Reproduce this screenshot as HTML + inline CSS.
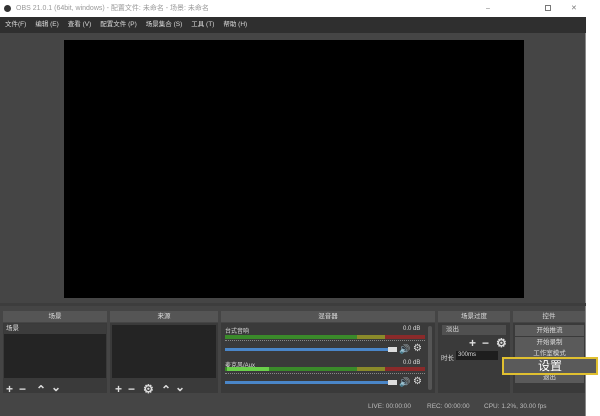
<!DOCTYPE html><html><head><meta charset="utf-8"><style>
*{margin:0;padding:0;box-sizing:border-box}
body{width:600px;height:416px;background:#fff;position:relative;overflow:hidden;font-family:"Liberation Sans","Noto Sans CJK SC",sans-serif;font-size:7px;color:#ddd}
.a{position:absolute}
.win{left:0;top:0;width:586px;height:416px;background:#454545;border-right:1px solid #888}
.title{left:0;top:0;width:586px;height:17px;background:#fff;color:#999;font-size:7px;line-height:17px;padding-left:16px}
.menu{left:0;top:17px;width:586px;height:16px;background:#2f2f2f;line-height:16px;font-size:6.5px;color:#ddd}
.menu span{margin-left:5px;margin-right:4px}
.hdr{top:311px;height:11px;background:#555;color:#ddd;text-align:center;line-height:11px;font-size:6.5px}
.pan{background:#3a3a3a}
.btn{background:#5a5a5a;color:#ddd;text-align:center;font-size:6.5px;line-height:11px;height:11px}
.meter{height:4px;background:linear-gradient(90deg,#3a8a2a 0,#3a8a2a 66%,#8a8a2a 66%,#8a8a2a 80%,#8a2a2a 80%)}
.blue{height:3px;background:#4a86c8}
.st{top:403px;color:#bbb;font-size:6.5px}
.ic{font-size:12px;line-height:12px;color:#ddd;font-weight:bold}
</style></head><body>
<div class="a win"></div>
<div class="a title"><span style="position:absolute;left:4px;top:5px;width:7px;height:7px;border-radius:50%;background:#333"></span>OBS 21.0.1 (64bit, windows) - 配置文件: 未命名 - 场景: 未命名
<span style="position:absolute;left:486px;color:#777">–</span><span style="position:absolute;left:545px;top:5px;width:6px;height:6px;border:1px solid #777"></span><span style="position:absolute;left:571px;color:#777">✕</span></div>
<div class="a menu"><span>文件(F)</span><span>编辑 (E)</span><span>查看 (V)</span><span>配置文件 (P)</span><span>场景集合 (S)</span><span>工具 (T)</span><span>帮助 (H)</span></div>
<div class="a" style="left:64px;top:40px;width:460px;height:258px;background:#000"></div>
<div class="a" style="left:0;top:303px;width:586px;height:3px;background:#3d3d3d"></div>
<div class="a hdr" style="left:3px;width:104px">场景</div>
<div class="a hdr" style="left:110px;width:108px">来源</div>
<div class="a hdr" style="left:221px;width:214px">混音器</div>
<div class="a hdr" style="left:438px;width:72px">场景过度</div>
<div class="a hdr" style="left:513px;width:72px">控件</div>
<div class="a pan" style="left:3px;top:323px;width:104px;height:70px"></div>
<div class="a" style="left:4px;top:324px;width:102px;height:10px;background:#3c3c3c;font-size:6.5px;line-height:10px;padding-left:2px">场景</div>
<div class="a" style="left:4px;top:334px;width:102px;height:44px;background:#242424"></div>
<div class="a ic" style="left:6px;top:383px">+</div>
<div class="a ic" style="left:19px;top:383px">−</div>
<div class="a ic" style="left:36px;top:384px">⌃</div>
<div class="a ic" style="left:51px;top:381px">⌄</div>
<div class="a pan" style="left:110px;top:323px;width:108px;height:70px"></div>
<div class="a" style="left:112px;top:325px;width:104px;height:53px;background:#242424"></div>
<div class="a ic" style="left:115px;top:383px">+</div>
<div class="a ic" style="left:128px;top:383px">−</div>
<div class="a ic" style="left:143px;top:383px">⚙</div>
<div class="a ic" style="left:161px;top:384px">⌃</div>
<div class="a ic" style="left:175px;top:381px">⌄</div>
<div class="a pan" style="left:221px;top:323px;width:214px;height:70px"></div>
<div class="a" style="left:225px;top:326px;font-size:6px">台式音响</div>
<div class="a" style="left:403px;top:326px;font-size:6px">0.0 dB</div>
<div class="a meter" style="left:225px;top:335px;width:200px"></div>
<div class="a" style="left:225px;top:340px;width:200px;height:3px;border-top:1px dotted #888"></div>
<div class="a blue" style="left:225px;top:348px;width:165px"></div>
<div class="a" style="left:388px;top:347px;width:9px;height:5px;background:#ddd"></div>
<div class="a" style="left:399px;top:344px;font-size:9px">🔊</div>
<div class="a" style="left:413px;top:343px;font-size:10px">⚙</div>
<div class="a" style="left:225px;top:360px;font-size:6px">麦克风/Aux</div>
<div class="a" style="left:403px;top:360px;font-size:6px">0.0 dB</div>
<div class="a meter" style="left:225px;top:367px;width:200px"></div>
<div class="a" style="left:227px;top:367px;width:42px;height:4px;background:#6ad04a"></div>
<div class="a" style="left:225px;top:373px;width:200px;height:3px;border-top:1px dotted #888"></div>
<div class="a blue" style="left:225px;top:381px;width:165px"></div>
<div class="a" style="left:388px;top:380px;width:9px;height:5px;background:#ddd"></div>
<div class="a" style="left:399px;top:377px;font-size:9px">🔊</div>
<div class="a" style="left:413px;top:376px;font-size:10px">⚙</div>
<div class="a" style="left:428px;top:326px;width:4px;height:64px;background:#555;border-radius:2px"></div>
<div class="a pan" style="left:438px;top:323px;width:72px;height:70px"></div>
<div class="a" style="left:442px;top:325px;width:64px;height:10px;background:#505050;font-size:6.5px;line-height:10px;padding-left:4px">淡出</div>
<div class="a ic" style="left:469px;top:337px">+</div>
<div class="a ic" style="left:482px;top:337px">−</div>
<div class="a ic" style="left:496px;top:337px">⚙</div>
<div class="a" style="left:441px;top:352px;font-size:6.5px">时长</div>
<div class="a" style="left:456px;top:351px;width:42px;height:9px;background:#1e1e1e;font-size:6px;line-height:9px;padding-left:2px">300ms</div>
<div class="a pan" style="left:513px;top:323px;width:72px;height:70px"></div>
<div class="a btn" style="left:515px;top:325px;width:69px">开始推流</div>
<div class="a btn" style="left:515px;top:337px;width:69px">开始录制</div>
<div class="a btn" style="left:515px;top:348px;width:69px">工作室模式</div>
<div class="a btn" style="left:515px;top:372px;width:69px">退出</div>
<div class="a" style="left:502px;top:357px;width:96px;height:18px;background:#5a5a5a;border:2px solid #e0c030;text-align:center;font-size:12px;line-height:14px;color:#fff">设置</div>
<div class="a st" style="left:368px">LIVE: 00:00:00</div>
<div class="a st" style="left:427px">REC: 00:00:00</div>
<div class="a st" style="left:484px">CPU: 1.2%, 30.00 fps</div>
</body></html>
